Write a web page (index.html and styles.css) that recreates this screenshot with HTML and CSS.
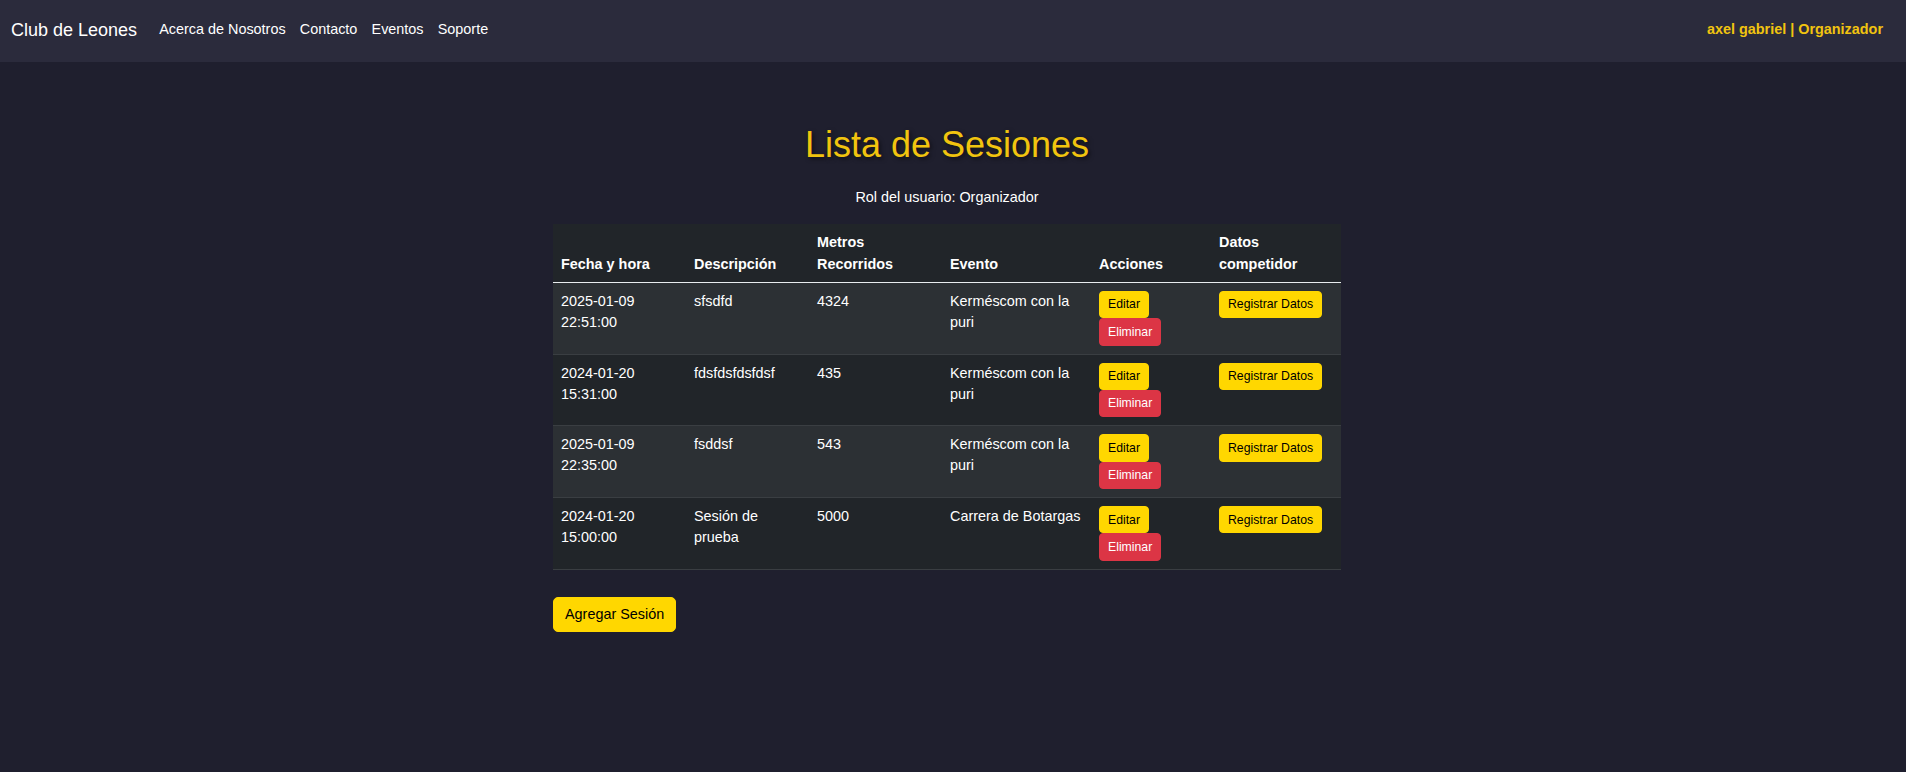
FILE: index.html
```html
<!DOCTYPE html>
<html lang="es">
<head>
<meta charset="utf-8">
<title>Lista de Sesiones</title>
<link rel="stylesheet" href="styles.css">
</head>
<body>
<div class="page">
  <nav class="navbar">
    <a class="brand">Club de Leones</a>
    <ul class="links">
      <li><a>Acerca de Nosotros</a></li>
      <li><a>Contacto</a></li>
      <li><a>Eventos</a></li>
      <li><a>Soporte</a></li>
    </ul>
    <div class="user">axel gabriel | Organizador</div>
  </nav>
  <main class="main">
    <div class="container">
      <h1 class="title">Lista de Sesiones</h1>
      <p class="role">Rol del usuario: Organizador</p>
      <table class="sessions">
        <colgroup>
          <col class="c1"><col class="c2"><col class="c3"><col class="c4"><col class="c5"><col class="c6">
        </colgroup>
        <thead>
          <tr>
            <th>Fecha y hora</th>
            <th>Descripción</th>
            <th>Metros Recorridos</th>
            <th>Evento</th>
            <th>Acciones</th>
            <th>Datos competidor</th>
          </tr>
        </thead>
        <tbody>
          <tr>
            <td>2025-01-09 22:51:00</td>
            <td>sfsdfd</td>
            <td>4324</td>
            <td>Kerméscom con la puri</td>
            <td><div class="acts"><button class="btn-sm yellow">Editar</button><button class="btn-sm red">Eliminar</button></div></td>
            <td><button class="btn-sm yellow">Registrar Datos</button></td>
          </tr>
          <tr>
            <td>2024-01-20 15:31:00</td>
            <td>fdsfdsfdsfdsf</td>
            <td>435</td>
            <td>Kerméscom con la puri</td>
            <td><div class="acts"><button class="btn-sm yellow">Editar</button><button class="btn-sm red">Eliminar</button></div></td>
            <td><button class="btn-sm yellow">Registrar Datos</button></td>
          </tr>
          <tr>
            <td>2025-01-09 22:35:00</td>
            <td>fsddsf</td>
            <td>543</td>
            <td>Kerméscom con la puri</td>
            <td><div class="acts"><button class="btn-sm yellow">Editar</button><button class="btn-sm red">Eliminar</button></div></td>
            <td><button class="btn-sm yellow">Registrar Datos</button></td>
          </tr>
          <tr>
            <td>2024-01-20 15:00:00</td>
            <td>Sesión de prueba</td>
            <td>5000</td>
            <td>Carrera de Botargas</td>
            <td><div class="acts"><button class="btn-sm yellow">Editar</button><button class="btn-sm red">Eliminar</button></div></td>
            <td><button class="btn-sm yellow">Registrar Datos</button></td>
          </tr>
        </tbody>
      </table>
      <button class="btn-add">Agregar Sesión</button>
    </div>
  </main>
</div>
</body>
</html>
```

FILE: styles.css
```css
html {
  background: #ffffff;
}
body {
  margin: 0;
  font-family: "Liberation Sans", Arial, sans-serif;
  font-size: 14.4px;
  color: #ffffff;
}
.page {
  width: calc(100% - 9px);
  min-height: 100vh;
  background: #1f1f2e;
}
.navbar {
  height: 62px;
  box-sizing: border-box;
  background: #2b2b3c;
  display: flex;
  align-items: center;
  padding: 0 23px 2px 11px;
}
.brand {
  font-size: 18px;
  line-height: 27px;
  color: #ffffff;
  margin-right: 15px;
}
.links {
  list-style: none;
  margin: 0;
  padding: 0;
  display: flex;
}
.links a {
  display: block;
  padding: 0 7.1px;
  line-height: 21.6px;
  color: #ffffff;
}
.user {
  margin-left: auto;
  font-weight: bold;
  color: #f1c40f;
  line-height: 21.6px;
}
.main {
  padding: 61px 12px 40px 0;
}
.container {
  width: 788px;
  margin: 0 auto;
}
.title {
  margin: 0;
  font-size: 36px;
  font-weight: normal;
  line-height: 1.2;
  text-align: center;
  color: #f1c40f;
  text-shadow: 2px 2px 4px rgba(0, 0, 0, 0.5);
}
.role {
  margin: 21px 0 0;
  line-height: 21.6px;
  text-align: center;
}
.sessions {
  margin-top: 15px;
  width: 788px;
  border-collapse: collapse;
  table-layout: fixed;
}
.c1 { width: 133px; }
.c2 { width: 123px; }
.c3 { width: 133px; }
.c4 { width: 149px; }
.c5 { width: 120px; }
.c6 { width: 130px; }
.sessions th {
  background: #212529;
  text-align: left;
  vertical-align: bottom;
  font-weight: bold;
  padding: 7px 8px;
  line-height: 22px;
  border-bottom: 1px solid #e9ecef;
}
.sessions td {
  vertical-align: top;
  padding: 8px;
  line-height: 21px;
  border-bottom: 1px solid #3a3e42;
}
.sessions tbody tr:nth-child(odd) td {
  background: #2c3034;
}
.sessions tbody tr:nth-child(even) td {
  background: #212529;
}
.acts {
  display: flex;
  flex-direction: column;
  align-items: flex-start;
}
.btn-sm {
  font-family: "Liberation Sans", Arial, sans-serif;
  font-size: 12.25px;
  line-height: 1.5;
  padding: 3.5px 8px;
  border-radius: 4px;
  border: 1px solid transparent;
  cursor: pointer;
  display: inline-block;
}
.yellow {
  background: #ffd700;
  border-color: #ffd700;
  color: #000000;
}
.red {
  background: #dc3545;
  border-color: #dc3545;
  color: #ffffff;
}
.btn-add {
  margin-top: 27px;
  font-family: "Liberation Sans", Arial, sans-serif;
  font-size: 14.4px;
  line-height: 21.6px;
  padding: 6px 11px;
  border-radius: 5px;
  border: 1px solid #ffd700;
  background: #ffd700;
  color: #000000;
  display: block;
}
```
